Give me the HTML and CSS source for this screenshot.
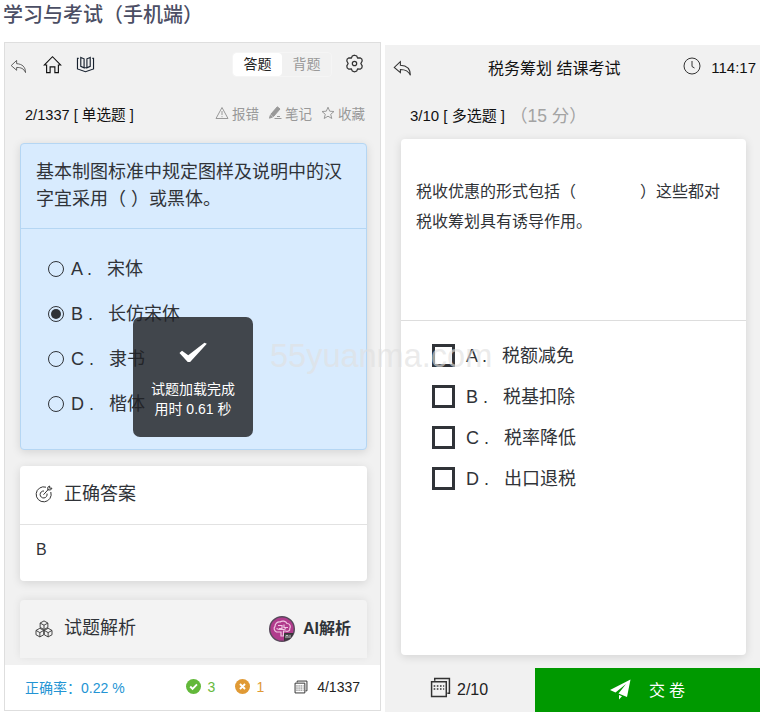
FILE: index.html
```html
<!DOCTYPE html>
<html lang="zh-CN">
<head>
<meta charset="utf-8">
<title>学习与考试（手机端）</title>
<link rel="stylesheet" href="styles.css">
</head>
<body>
<h1>学习与考试（手机端）</h1>
<main class="phones">
  <section class="phone study">
    <header class="bar">
      <svg class="back" viewBox="0 0 18 16"><path d="M7 1.500 1.200 7l5.800 5V9c4.500 0 7.500 1 9.500 5.500C16.500 8.500 13 5.300 7 5z"/></svg>
      <svg class="home" viewBox="0 0 20 20"><path d="M1.500 10.500 10 1.800l8.500 8.700h-2.300v8h-3.700v-6h-5v6H3.800v-8z"/></svg>
      <svg class="book" viewBox="0 0 20 18"><path d="M5 1.500 8.500 3v9.500L5 11zM15 1.500 11.500 3v9.500L15 11zM8.500 12.500h3M2.800 2.500H1.500v11.200l8.500 3 8.500-3V2.500h-1.300"/></svg>
      <div class="tabs"><span class="tab on">答题</span><span class="tab">背题</span></div>
      <svg class="gear" viewBox="0 0 20 20"><path d="M10 1.300 12.300 2l1 2.200 2.700-.2 1.700 1.300.4 2-1.400 2.700 1.400 2.600-.4 2-1.700 1.400-2.700-.2-1 2.200-2.300.7-2.300-.7-1-2.200-2.700.2-1.700-1.400-.4-2L3.300 10 1.900 7.300l.4-2L4 4l2.700.2 1-2.200z"/><circle cx="10" cy="10" r="2.300"/></svg>
    </header>
    <div class="meta">
      <span class="count">2/1337 [ 单选题 ]</span>
      <span class="act"><svg viewBox="0 0 14 14"><path d="M7 1.500 13 12.500H1zM7 5v4M7 10.200v1"/></svg>报错</span>
      <span class="act"><svg viewBox="0 0 14 14"><path class="solid" d="M9.300.8 12 3 5.500 10.500 2.800 8.300zM2.300 9.200 4.500 11l-3 1.200z"/><path d="M6.500 12.500h7M9 10.500h3"/></svg>笔记</span>
      <span class="act"><svg viewBox="0 0 14 14"><path d="m7 1.200 1.700 4 4.300.3-3.300 2.800 1.100 4.200L7 10.200l-3.800 2.300 1.100-4.200L1 5.500l4.300-.3z"/></svg>收藏</span>
    </div>
    <article class="card question">
      <p class="stem">基本制图标准中规定图样及说明中的汉字宜采用（ ）或黑体。</p>
      <ul class="choices">
        <li><i class="radio"></i><b>A .</b><span>宋体</span></li>
        <li><i class="radio checked"></i><b>B .</b><span>长仿宋体</span></li>
        <li><i class="radio"></i><b>C .</b><span>隶书</span></li>
        <li><i class="radio"></i><b>D .</b><span>楷体</span></li>
      </ul>
    </article>
    <article class="card answer">
      <h2><svg viewBox="0 0 18 18"><path d="M15.800 7A7.500 7.500 0 1 1 11 2.200M12 8.600A3.500 3.500 0 1 1 9 6M8.500 9.700l5-5.500M12.800 4.800V2.200L14.700 1v2.200H17L15.500 5z"/></svg>正确答案</h2>
      <p>B</p>
    </article>
    <article class="card analysis">
      <h2><svg viewBox="0 0 20 20"><path d="m10 1 4.300 2.400v4.800L10 10.600 5.700 8.200V3.400zM5.700 3.400 10 5.800l4.300-2.400M10 5.800v4.800M5.400 9.200l4.300 2.400v4.800l-4.300 2.400-4.300-2.400v-4.800zM1.100 11.600 5.400 14l4.300-2.400M5.400 14v4.800M14.600 9.200l4.300 2.400v4.800l-4.300 2.400-4.300-2.400v-4.800zM10.300 11.600l4.300 2.400 4.300-2.400M14.600 14v4.800"/></svg>试题解析</h2>
      <div class="ai">
        <svg viewBox="0 0 26 26"><circle cx="13" cy="13" r="12.300" fill="#b13b8d" stroke="#57495b" stroke-width="1.400"/><path d="M12 20v-4H7.500C5 15 4.500 12 6 10.500 6 7.500 8.500 5.500 11 6c2-1.700 6-1 7 1.500 3 0 4 3 2.800 5 .3 2.500-2.300 3.500-4.300 2.500H14.500v5zM9 9.500h4v3h-3M15 8.500v3h4M7.500 12.500l2.500 1h5l2-1" fill="none" stroke="#efc7e2" stroke-width="1.200"/><path d="M15.500 17.500H24l-3 5-5.500 2z" fill="#484149"/><path d="M17 22v-2.500h2V22M21 19v3" fill="none" stroke="#ddd" stroke-width=".8"/></svg>
        <strong>AI解析</strong>
      </div>
    </article>
    <footer class="stats">
      <span class="rate">正确率：0.22 %</span>
      <span class="right"><svg viewBox="0 0 16 16"><circle cx="8" cy="8" r="8"/><path d="m4.500 8 2.500 2.600 4.700-4.800"/></svg>3</span>
      <span class="wrong"><svg viewBox="0 0 16 16"><circle cx="8" cy="8" r="8"/><path d="m5.300 5.300 5.400 5.400m0-5.400-5.400 5.400"/></svg>1</span>
      <span class="total"><svg viewBox="0 0 20 20"><path d="M4.500 3.500v-2h14v14h-2M1.500 4.500h14v14h-14z"/><path class="dots" d="M3.500 8.500h10M3.500 11.500h10M3.500 14.500h10"/></svg>4/1337</span>
    </footer>
    <div class="toast">
      <svg viewBox="0 0 30 22"><path d="M.8 11.500 3.500 9.200l6.500 4.600L27 .8l2.500 1L12 21H9.500z"/></svg>
      <p>试题加载完成<br>用时 0.61 秒</p>
    </div>
  </section>

  <section class="phone exam">
    <header class="bar">
      <svg class="back" viewBox="0 0 18 16"><path d="M7 1.500 1.200 7l5.800 5V9c4.500 0 7.500 1 9.500 5.500C16.500 8.500 13 5.300 7 5z"/></svg>
      <span class="title">税务筹划 结课考试</span>
      <svg class="clock" viewBox="0 0 18 18"><circle cx="9" cy="9" r="8"/><path d="M9 4v5.500l2.500 1.500"/></svg>
      <span class="time">114:17</span>
    </header>
    <div class="meta">
      <span class="count">3/10 [ 多选题 ]</span><span class="score">（15 分）</span>
    </div>
    <article class="card paper">
      <p class="stem">税收优惠的形式包括（<span class="blank"></span>）这些都对税收筹划具有诱导作用。</p>
      <ul class="choices">
        <li><i class="box"></i><b>A .</b><span>税额减免</span></li>
        <li><i class="box"></i><b>B .</b><span>税基扣除</span></li>
        <li><i class="box"></i><b>C .</b><span>税率降低</span></li>
        <li><i class="box"></i><b>D .</b><span>出口退税</span></li>
      </ul>
    </article>
    <footer class="submit">
      <span class="done"><svg viewBox="0 0 20 20"><path d="M4.500 3.500v-2h14v14h-2M1.500 4.500h14v14h-14z"/><path class="dots" d="M3.500 8.500h10M3.500 11.500h10"/></svg>2/10</span>
      <span class="send"><svg viewBox="0 0 21 21"><path d="M20.500.500 0 11l5.500 2.500L16 5 8.500 14.500 17 18zM9 16v4.500l3-3.300z"/></svg>交卷</span>
    </footer>
  </section>
</main>
<div class="watermark">55yuanma.com</div>
</body>
</html>
```

FILE: styles.css
```css
* { box-sizing: border-box; }
body {
  margin: 0;
  width: 763px;
  height: 719px;
  overflow: hidden;
  position: relative;
  background: #fff;
  color: #303338;
  font-family: "Liberation Sans", "Noto Sans CJK SC", sans-serif;
}
h1, h2, p, ul { margin: 0; padding: 0; font-weight: normal; }
ul { list-style: none; }
svg { fill: none; stroke: #333; flex: none; overflow: visible; }

h1 {
  height: 42px;
  padding-left: 3px;
  font-size: 20px;
  line-height: 31px;
  font-weight: 500;
  color: #4b4e64;
}
.phones { display: flex; gap: 4px; padding-left: 4px; }
.phone { position: relative; display: flex; flex-direction: column; background: #f1f1f1; }
.bar { display: flex; align-items: center; color: #111; }
.meta { display: flex; align-items: center; color: #111; }
.card { background: #fff; border-radius: 4px; box-shadow: 0 2px 10px rgba(0, 0, 0, .12); }
.choices li { display: flex; align-items: center; font-size: 18px; }
.choices b { font-weight: normal; white-space: pre; }
.choices li span { padding-bottom: 4px; }
.dots { stroke-dasharray: 1.5 1.5; }

/* study screen */
.study { width: 377px; height: 669px; border: 1px solid #dedede; }
.study .bar { height: 43px; padding: 0 16px 0 5px; }
.study .back { width: 17px; height: 15px; stroke: #555; margin-top: 4px; }
.home { width: 19px; height: 19px; margin-left: 16px; stroke: #111; stroke-width: 1.2; }
.book { width: 19px; height: 17px; margin-left: 14px; stroke: #16202e; stroke-width: 1.2; }
.tabs {
  display: flex;
  margin-left: auto;
  margin-right: 13px;
  border: 1px solid #f5f5f5;
  border-radius: 4px;
}
.tab { width: 49px; font-size: 14px; line-height: 23px; text-align: center; color: #999; }
.tab.on { background: #fff; color: #222; border-radius: 4px; }
.gear { width: 19px; height: 19px; stroke-width: 1.3; margin-top: -3px; }
.study .meta { height: 57px; padding: 0 15px 3px 20px; font-size: 14.600px; }
.study .count { margin-right: auto; }
.act { display: flex; align-items: center; gap: 3px; margin-left: 9px; font-size: 13.5px; color: #999; }
.act svg { width: 14px; height: 14px; stroke: #999; }
.act .solid { fill: #999; }
.study .card { margin: 0 13px 0 15px; }
.study .question { height: 307px; background: #d8ebfe; border: 1px solid #b5d6f3; }
.question .stem { height: 85px; padding: 15px 15px 0; font-size: 18px; line-height: 27px; border-bottom: 1px solid #b5d6f3; }
.question .choices { padding: 17px 0 0 27px; }
.question li { height: 45px; }
.question b { padding-top: 1px; margin-right: 15px; }
.radio { display: grid; place-items: center; width: 16px; height: 16px; margin-right: 7px; border: 1px solid #303338; border-radius: 50%; }
.radio.checked::after { content: ""; width: 10px; height: 10px; border-radius: 50%; background: #303338; }
.study h2 { display: flex; align-items: center; font-size: 18px; line-height: 27px; }
.study h2 svg { width: 18px; height: 18px; margin-right: 11px; }
.study .answer { height: 115px; margin-top: 16px; }
.answer h2 { height: 59px; padding: 0 15px 2px; border-bottom: 1px solid #e2e2e2; }
.answer p { padding: 13px 16px; font-size: 16px; line-height: 24px; }
.study .analysis { display: flex; justify-content: space-between; align-items: center; height: 58px; margin-top: 19px; padding: 0 16px 1px 15px; background: #f3f3f3; border-radius: 4px 4px 0 0; box-shadow: 0 -1px 8px rgba(0, 0, 0, .08); }
.ai { display: flex; align-items: center; gap: 8px; font-size: 16px; line-height: 24px; }
.ai svg { width: 26px; height: 26px; }
.stats { display: flex; align-items: center; height: 45px; margin-top: auto; padding: 0 20px 1px; background: #fff; font-size: 14px; z-index: 1; }
.stats span { display: flex; align-items: center; }
.rate { color: #2394d4; margin-right: auto; }
.stats .right { gap: 7px; color: #67b93d; }
.stats .wrong { gap: 6px; color: #e09a35; margin: 0 30px 0 20px; }
.right svg, .wrong svg { width: 15px; height: 15px; margin-top: -1px; stroke: #fff; stroke-width: 2; }
.right circle { fill: #62b83a; stroke: none; }
.wrong circle { fill: #e09a35; stroke: none; }
.stats .total { gap: 9px; color: #222; }
.total svg { width: 14px; height: 14px; stroke-width: 1.4; }
.toast {
  position: absolute;
  left: 128px;
  top: 274px;
  width: 120px;
  height: 120px;
  padding-top: 25px;
  text-align: center;
  color: #fff;
  border-radius: 7px;
  background: rgba(32, 33, 36, .82);
}
.toast svg { display: block; width: 30px; height: 21px; margin: 0 auto 16px 45px; fill: #fff; stroke: none; }
.toast p { font-size: 14px; line-height: 20px; }

/* exam screen */
.exam { width: 375px; height: 667px; margin-top: 3px; }
.exam .bar { height: 45px; padding: 0 4px 0 8px; font-size: 15px; }
.exam .back { width: 19px; height: 17px; margin-top: 1px; }
.title { margin: -2px auto 0 76px; font-size: 16px; }
.clock { width: 18px; height: 18px; margin-right: 10px; margin-top: -3px; }
.exam .meta { height: 49px; padding: 0 0 0 25px; font-size: 15px; }
.score { color: #a3a3a3; font-size: 17.5px; margin-left: 5px; }
.paper { height: 516px; margin: 0 14px 0 16px; }
.paper .stem { height: 182px; padding: 38px 15px 0; font-size: 16px; line-height: 30px; border-bottom: 1px solid #ddd; }
.blank { display: inline-block; width: 64px; }
.paper .choices { padding: 14px 0 0 31px; }
.paper li { height: 41px; }
.box { width: 23px; height: 23px; margin-right: 11px; border: 3px solid #303338; }
.paper b { padding-top: 2px; margin-right: 15px; }
.submit { display: flex; height: 44px; margin-top: auto; font-size: 16px; }
.done { display: flex; align-items: center; gap: 6px; width: 150px; padding-left: 45px; color: #222; }
.done svg { width: 21px; height: 21px; stroke-width: 1.4; margin-top: -5px; }
.send { display: flex; align-items: center; justify-content: center; gap: 18px; flex: 1; padding: 0 0 3px 4px; background: #090; color: #fff; letter-spacing: 4px; }
.send svg { width: 21px; height: 21px; fill: #fff; stroke: none; margin-top: 1px; }

.watermark {
  position: absolute;
  left: 270px;
  top: 338px;
  font-size: 32.500px;
  line-height: 36px;
  color: rgba(224, 224, 224, .65);
}
```
